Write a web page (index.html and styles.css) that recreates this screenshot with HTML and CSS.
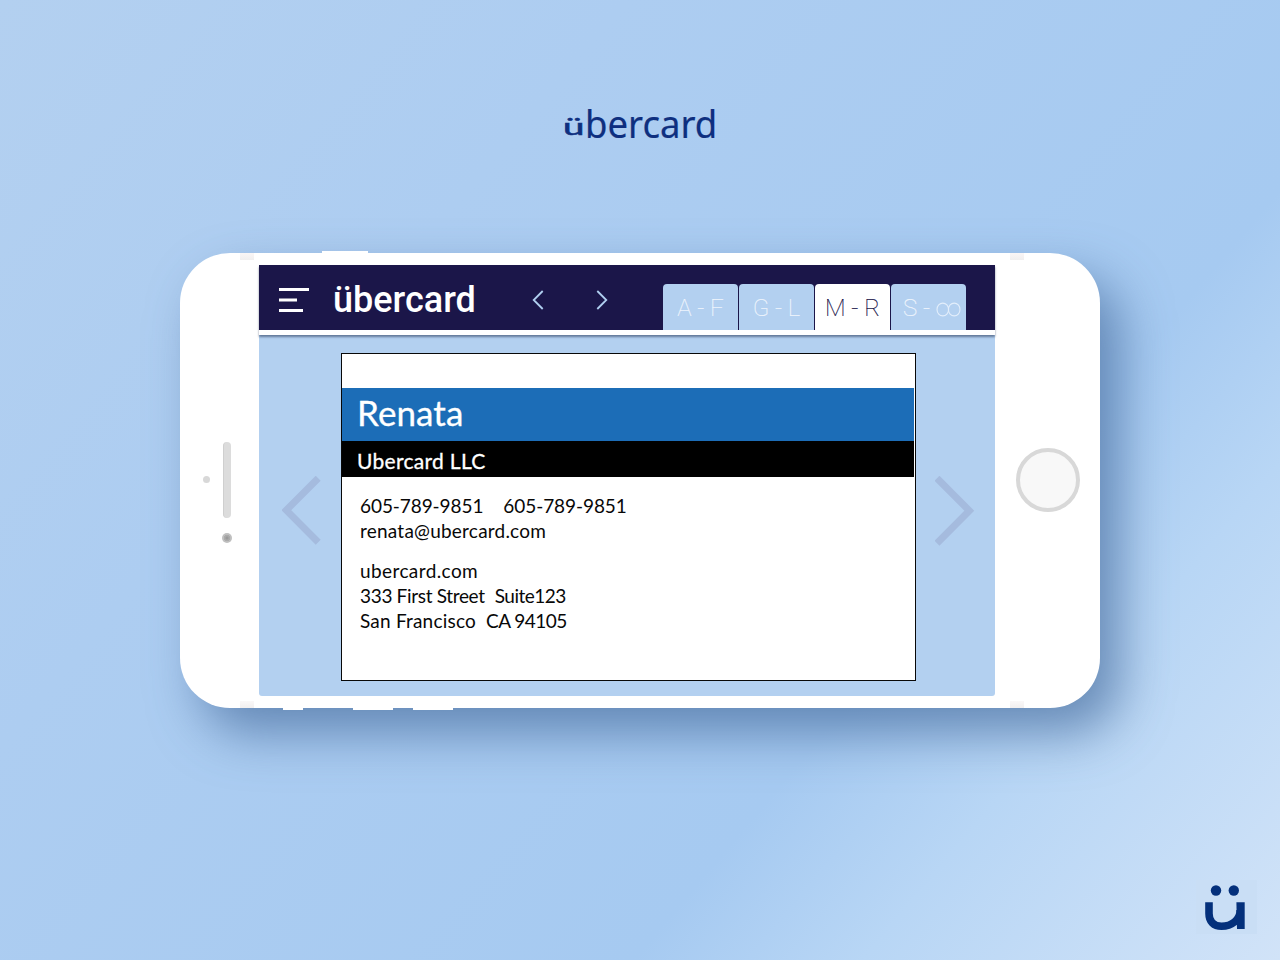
FILE: index.html
```html
<!DOCTYPE html>
<html lang="en">
<head>
<meta charset="utf-8">
<title>übercard</title>
<link rel="stylesheet" href="styles.css">
</head>
<body>
<h1 class="brand"><span class="brand-u">ü</span><span class="brand-rest">bercard</span></h1>

<main class="phone">
  <i class="side-button power"></i>
  <i class="side-button mute"></i>
  <i class="side-button volume-up"></i>
  <i class="side-button volume-down"></i>
  <i class="band band-top band-left"></i>
  <i class="band band-top band-right"></i>
  <i class="band band-bottom band-left"></i>
  <i class="band band-bottom band-right"></i>

  <div class="bezel-left">
    <i class="sensor"></i>
    <div class="earpiece"><i class="speaker"></i><i class="camera"></i></div>
  </div>

  <section class="screen">
    <header class="bar">
      <svg class="menu" width="30" height="24" viewBox="0 0 30 24"><path d="M0 0h30v3H0zM0 10.5h18v3H0zM0 21h24v3H0z" fill="#fff"/></svg>
      <span class="title">übercard</span>
      <nav class="steps">
        <svg width="12" height="20" viewBox="0 0 12 20"><path d="M10.7 1 1.7 10l9 9"/></svg>
        <svg width="12" height="20" viewBox="0 0 12 20"><path d="M1.3 1l9 9-9 9"/></svg>
      </nav>
      <nav class="tabs">
        <a class="tab">A - F</a>
        <a class="tab">G - L</a>
        <a class="tab active">M - R</a>
        <a class="tab last">S - <svg class="infinity" width="25" height="15" viewBox="0 0 25 15"><ellipse cx="6.8" cy="7.5" rx="5.8" ry="6.4"/><ellipse cx="18.2" cy="7.5" rx="5.8" ry="6.4"/></svg></a>
      </nav>
    </header>
    <div class="stage">
      <svg class="prev" width="40" height="70" viewBox="0 0 40 70"><path d="M36.2 2.2 4.3 34.2l31.9 32"/></svg>
      <article class="card">
        <h2 class="name">Renata</h2>
        <h3 class="company">Ubercard LLC</h3>
        <div class="details">
          <p class="line phones"><span>605-789-9851</span><span>605-789-9851</span></p>
          <p class="line email">renata@ubercard.com</p>
          <p class="line site">ubercard.com</p>
          <p class="line street"><span>333 First Street</span><span class="tight">Suite123</span></p>
          <p class="line city"><span>San Francisco</span><span class="tight">CA 94105</span></p>
        </div>
      </article>
      <svg class="next" width="40" height="70" viewBox="0 0 40 70"><path d="M2 2.2l32.300 32.500L2 67.200"/></svg>
    </div>
  </section>

  <div class="bezel-right"><i class="home"></i></div>
</main>

<svg class="mark" width="61" height="54" viewBox="0 0 61 54">
  <rect width="61" height="54" fill="#c9def5"/>
  <g fill="#04307b"><circle cx="20" cy="10.5" r="5.2"/><circle cx="37.800" cy="10.500" r="5.200"/></g>
  <path d="M13 22.300V33.500C13 42 18 46.300 25.500 46.300 35.500 46.300 44.200 40 44.200 30" fill="none" stroke="#04307b" stroke-width="7.600"/>
  <path d="M40.400 22.300H48.700V49H41z" fill="#04307b"/>
</svg>
</body>
</html>
```
FILE: styles.css
```css
* { box-sizing: border-box; margin: 0; padding: 0; }

body {
  width: 1280px;
  height: 960px;
  overflow: hidden;
  position: relative;
  background: linear-gradient(130deg, #b3d0f0 0%, #adcdf1 30%, #a6caf1 69%, #b8d6f5 80%, #d1e3f8 100%);
  font-family: Lato, "Open Sans", sans-serif;
}

.brand {
  height: 253px;
  padding: 95px 0 0 563px;
  display: flex;
  color: #0e2f7f;
  font-weight: 400;
  line-height: 55px;
  white-space: nowrap;
}
.brand-u { width: 20px; font: 400 24px/55px Lato, sans-serif; -webkit-text-stroke: .6px; transform: translateY(3px) scaleX(1.6); transform-origin: 0 50%; }
.brand-rest { margin-left: 2px; font: 400 39px/55px "Noto Sans", sans-serif; -webkit-text-stroke: .2px; transform: scaleX(.937); transform-origin: 0 50%; }

.phone {
  position: relative;
  display: flex;
  width: 920px;
  height: 455px;
  margin-left: 180px;
  border-radius: 50px;
  background: #fff;
  box-shadow: 20px 25px 50px rgba(62, 100, 150, .65);
}

.side-button { position: absolute; height: 2px; background: #fff; }
.power { left: 142px; top: -2px; width: 46px; }
.mute { left: 103px; bottom: -2px; width: 20px; }
.volume-up { left: 173px; bottom: -2px; width: 40px; }
.volume-down { left: 233px; bottom: -2px; width: 40px; }

.band { position: absolute; width: 14px; height: 7px; }
.band-top { top: 0; background: linear-gradient(#faf6f6, #f1efef); }
.band-bottom { bottom: 0; background: linear-gradient(#faf8f8, #f1efef); }
.band-left { left: 60px; }
.band-right { left: 830px; }

.bezel-left { width: 79px; display: flex; align-items: flex-start; padding-left: 23px; }
.sensor { width: 7px; height: 7px; margin-top: 223px; border-radius: 50%; background: #d8d8d8; }
.earpiece { display: flex; flex-direction: column; align-items: center; gap: 15px; margin: 189px 0 0 12px; }
.speaker { width: 8px; height: 76px; border-radius: 4px; background: #dcdcdc; border-left: 1px solid #cfcfcf; }
.camera { width: 10px; height: 10px; border-radius: 50%; background: radial-gradient(circle, #999 0 1px, #aaa 2px 3px, #bfbfbf 3.5px); }

.screen {
  width: 736px;
  height: 431px;
  margin-top: 12px;
  display: flex;
  flex-direction: column;
  border-radius: 0 0 3px 3px;
  background: #b3d0f0;
}
.bar {
  height: 70px;
  display: flex;
  align-items: flex-start;
  background: #1b1649;
  border-bottom: 5px solid #fff;
  box-shadow: 0 2px 2px rgba(20, 35, 70, .5);
}
.menu { margin: 23px 0 0 20px; }
.title { width: 199px; margin-left: 24px; font: 500 36px/70px Roboto, sans-serif; color: #fff; }
.steps { display: flex; gap: 52px; margin-top: 25px; }
.steps path { fill: none; stroke: #b0cff0; stroke-width: 1.8; }
.tabs { display: flex; gap: 1px; margin: 19px 0 0 55px; }
.tab {
  display: flex;
  width: 75px;
  height: 46px;
  justify-content: center;
  border-radius: 4px 4px 0 0;
  background: #b3d0f0;
  color: #eff5fd;
  font: 100 24px/48px Roboto, sans-serif;
  -webkit-text-stroke: .2px;
  white-space: pre;
}
.tab.active { background: #fff; color: #1b1649; }
.tab.last { justify-content: flex-start; padding-left: 12px; }
.infinity { margin-top: 18px; fill: none; stroke: #e3eefb; stroke-width: 1.1; }

.stage { display: flex; align-items: flex-start; }
.prev, .next { margin-top: 141px; fill: none; stroke: #a5bbde; stroke-width: 7; }
.prev { margin-left: 23px; }
.next { margin-left: 19px; }

.card {
  width: 575px;
  height: 328px;
  margin: 18px 0 0 19px;
  padding-top: 34px;
  border: 1px solid #080808;
  background: #fff;
  color: #080808;
}
.name, .company { margin-right: 1px; padding-left: 15px; color: #fff; white-space: nowrap; }
.name { height: 53px; background: #1c6db7; font-size: 35px; font-weight: 400; line-height: 49px; letter-spacing: .1px; -webkit-text-stroke: .3px; }
.company { height: 36px; background: #000; font-size: 21px; font-weight: 400; line-height: 39px; letter-spacing: .3px; -webkit-text-stroke: .3px; }
.details { padding: 16px 0 0 18px; font-size: 19px; line-height: 25px; }
.line { display: flex; white-space: nowrap; }
.phones { gap: 20px; letter-spacing: -.08px; }
.email { letter-spacing: .22px; }
.site { margin-top: 15px; letter-spacing: .4px; }
.street, .city { gap: 10px; }
.street { letter-spacing: -.33px; }
.city { letter-spacing: .2px; }
.line .tight { letter-spacing: -.5px; }

.bezel-right { flex: 1; display: flex; align-items: flex-start; padding: 195px 0 0 21px; }
.home { width: 64px; height: 64px; border: 4px solid #d8d8d8; border-radius: 50%; background: #f8f8f8; }

.mark { position: absolute; left: 1196px; top: 880px; }
```
